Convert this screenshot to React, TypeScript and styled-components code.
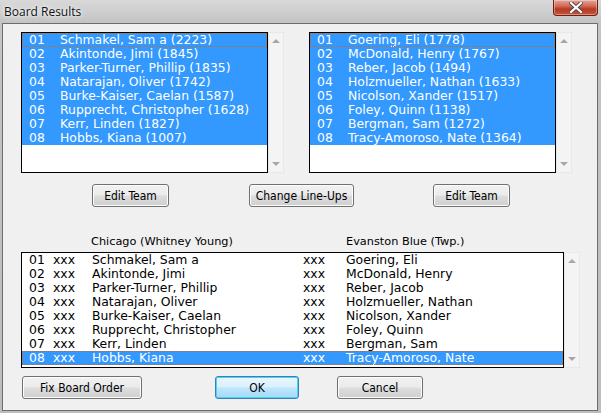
import React from "react";
import styled, { createGlobalStyle } from "styled-components";

const Global = createGlobalStyle`
  html, body { margin: 0; padding: 0; background: #f0f0f0; }
  body { font-family: "DejaVu Sans", Tahoma, sans-serif; }
  * { box-sizing: border-box; }
`;

const Window = styled.div`
  width: 601px;
  height: 413px;
  display: flex;
  flex-direction: column;
  background: linear-gradient(180deg, #d9d9d9 0px, #c4c4c4 22px, #bdbdbd 100%);
  padding: 0 3px 2px 2px;
`;

const TitleBar = styled.div`
  height: 23px;
  display: flex;
  align-items: flex-start;
  justify-content: space-between;
`;

const Title = styled.div`
  font-family: "Open Sans", "DejaVu Sans", sans-serif;
  font-size: 12px;
  color: #111;
  padding: 3px 0 0 2px;
  text-shadow: 0 0 6px #fff, 0 0 3px #fff;
`;

const CloseButton = styled.div`
  width: 45px;
  height: 16px;
  margin-left: auto;
  border: 1px solid #6e2014;
  border-top: none;
  border-radius: 0 0 4px 4px;
  background: linear-gradient(180deg, #e4a597 0%, #d26b57 40%, #b73a23 60%, #c9553c 100%);
  display: flex;
  align-items: center;
  justify-content: center;
  box-shadow: inset 0 0 0 1px rgba(255, 255, 255, 0.35);
`;

const Client = styled.div`
  flex: 1;
  background: #f0f0f0;
  border: 1px solid #6d6d6d;
  display: flex;
  flex-direction: column;
  padding: 8px 0 0 18px;
`;

const TopLists = styled.div`
  display: flex;
  gap: 25px;
`;

const ListWrap = styled.div`
  display: flex;
`;

const ListBox = styled.div<{ $w: number; $h: number }>`
  width: ${(p) => p.$w}px;
  height: ${(p) => p.$h}px;
  border: 1px solid #000;
  background: #fff;
  display: flex;
  flex-direction: column;
  overflow: hidden;
`;

const dot = "#c8681c";

const Row = styled.div<{ $sel?: boolean; $focus?: boolean }>`
  position: relative;
  height: 14px;
  flex: none;
  display: flex;
  align-items: center;
  font-size: 12.4px;
  line-height: 14px;
  white-space: nowrap;
  color: ${(p) => (p.$sel ? "#fff" : "#000")};
  background: ${(p) => (p.$sel ? "#3399ff" : "transparent")};
  &::after {
    content: "";
    display: ${(p) => (p.$focus ? "block" : "none")};
    position: absolute;
    inset: 0;
    pointer-events: none;
    background:
      linear-gradient(90deg, ${dot} 50%, transparent 50%) top left / 2px 1px repeat-x,
      linear-gradient(90deg, ${dot} 50%, transparent 50%) bottom left / 2px 1px repeat-x,
      linear-gradient(180deg, ${dot} 50%, transparent 50%) top left / 1px 2px repeat-y,
      linear-gradient(180deg, ${dot} 50%, transparent 50%) top right / 1px 2px repeat-y;
  }
`;

const Cell = styled.span<{ $w?: number; $pad?: number }>`
  display: inline-block;
  width: ${(p) => (p.$w ? `${p.$w}px` : "auto")};
  padding-left: ${(p) => p.$pad ?? 0}px;
  flex: none;
`;

const ScrollBar = styled.div<{ $h: number }>`
  width: 16px;
  height: ${(p) => p.$h}px;
  background: #f4f4f4;
  border: 1px solid #e8e8e8;
  display: flex;
  flex-direction: column;
  justify-content: space-between;
  align-items: center;
  padding: 6px 0 6px;
`;

const Arrow = styled.div<{ $down?: boolean }>`
  width: 0;
  height: 0;
  border-left: 4px solid transparent;
  border-right: 4px solid transparent;
  ${(p) =>
    p.$down
      ? "border-top: 4px solid #a7a7a7;"
      : "border-bottom: 4px solid #a7a7a7;"}
`;

const ButtonRow = styled.div<{ $top: number; $pad: number }>`
  display: flex;
  align-items: center;
  margin-top: ${(p) => p.$top}px;
  padding-left: ${(p) => p.$pad}px;
`;

const Button = styled.div<{ $w: number; $gap?: number; $default?: boolean }>`
  width: ${(p) => p.$w}px;
  height: 23px;
  margin-left: ${(p) => p.$gap ?? 0}px;
  border: 1px solid ${(p) => (p.$default ? "#3c7fb1" : "#707070")};
  border-radius: 3px;
  background: ${(p) =>
    p.$default
      ? "linear-gradient(180deg, #eaf6fd 0%, #d9f0fc 48%, #bee6fd 52%, #a7d9f5 100%)"
      : "linear-gradient(180deg, #f2f2f2 0%, #ebebeb 48%, #dddddd 52%, #cfcfcf 100%)"};
  box-shadow: inset 0 0 0 1px ${(p) => (p.$default ? "#48d3fb" : "#fcfcfc")};
  display: flex;
  align-items: center;
  justify-content: center;
  font-family: "DejaVu Sans Condensed", "DejaVu Sans", sans-serif;
  font-size: 12px;
  color: #000;
`;

const Labels = styled.div`
  display: flex;
  margin-top: 28px;
  height: 17px;
  font-size: 11.3px;
  color: #000;
`;

const Label = styled.div<{ $w: number; $pad?: number }>`
  width: ${(p) => p.$w}px;
  padding-left: ${(p) => p.$pad ?? 0}px;
  flex: none;
`;

const BottomWrap = styled.div`
  display: flex;
`;

const leftTeam = [
  ["01", "Schmakel, Sam a (2223)"],
  ["02", "Akintonde, Jimi (1845)"],
  ["03", "Parker-Turner, Phillip (1835)"],
  ["04", "Natarajan, Oliver (1742)"],
  ["05", "Burke-Kaiser, Caelan (1587)"],
  ["06", "Rupprecht, Christopher (1628)"],
  ["07", "Kerr, Linden (1827)"],
  ["08", "Hobbs, Kiana (1007)"],
];

const rightTeam = [
  ["01", "Goering, Eli (1778)"],
  ["02", "McDonald, Henry (1767)"],
  ["03", "Reber, Jacob (1494)"],
  ["04", "Holzmueller, Nathan (1633)"],
  ["05", "Nicolson, Xander (1517)"],
  ["06", "Foley, Quinn (1138)"],
  ["07", "Bergman, Sam (1272)"],
  ["08", "Tracy-Amoroso, Nate (1364)"],
];

const pairings = [
  ["01", "Schmakel, Sam a", "Goering, Eli"],
  ["02", "Akintonde, Jimi", "McDonald, Henry"],
  ["03", "Parker-Turner, Phillip", "Reber, Jacob"],
  ["04", "Natarajan, Oliver", "Holzmueller, Nathan"],
  ["05", "Burke-Kaiser, Caelan", "Nicolson, Xander"],
  ["06", "Rupprecht, Christopher", "Foley, Quinn"],
  ["07", "Kerr, Linden", "Bergman, Sam"],
  ["08", "Hobbs, Kiana", "Tracy-Amoroso, Nate"],
];

function TeamList({ rows }: { rows: string[][] }) {
  return (
    <ListWrap>
      <ListBox $w={247} $h={141}>
        {rows.map(([n, name], i) => (
          <Row key={n} $sel $focus={i === 0}>
            <Cell $w={38} $pad={7}>{n}</Cell>
            <Cell>{name}</Cell>
          </Row>
        ))}
      </ListBox>
      <ScrollBar $h={141}>
        <Arrow />
        <Arrow $down />
      </ScrollBar>
    </ListWrap>
  );
}

export default function App() {
  return (
    <>
      <Global />
      <Window>
        <TitleBar>
          <Title>Board Results</Title>
          <CloseButton>
            <svg width="14" height="11" viewBox="0 0 14 11">
              <path d="M2 1 L12 10 M12 1 L2 10" stroke="#4a4a4a" strokeWidth="4" strokeLinecap="square" />
              <path d="M2 1 L12 10 M12 1 L2 10" stroke="#fff" strokeWidth="2.2" strokeLinecap="square" />
            </svg>
          </CloseButton>
        </TitleBar>
        <Client>
          <TopLists>
            <TeamList rows={leftTeam} />
            <TeamList rows={rightTeam} />
          </TopLists>
          <ButtonRow $top={11} $pad={71}>
            <Button $w={77}>Edit Team</Button>
            <Button $w={105} $gap={80}>Change Line-Ups</Button>
            <Button $w={77} $gap={79}>Edit Team</Button>
          </ButtonRow>
          <Labels>
            <Label $w={325} $pad={70}>Chicago (Whitney Young)</Label>
            <Label $w={200}>Evanston Blue (Twp.)</Label>
          </Labels>
          <BottomWrap>
            <ListBox $w={543} $h={116}>
              {pairings.map(([n, a, b], i) => (
                <Row key={n} $sel={i === 7} $focus={i === 7}>
                  <Cell $w={31} $pad={7}>{n}</Cell>
                  <Cell $w={39}>xxx</Cell>
                  <Cell $w={211}>{a}</Cell>
                  <Cell $w={43}>xxx</Cell>
                  <Cell>{b}</Cell>
                </Row>
              ))}
            </ListBox>
            <ScrollBar $h={116}>
              <Arrow />
              <Arrow $down />
            </ScrollBar>
          </BottomWrap>
          <ButtonRow $top={8} $pad={1}>
            <Button $w={120}>Fix Board Order</Button>
            <Button $w={84} $gap={73} $default>OK</Button>
            <Button $w={86} $gap={38}>Cancel</Button>
          </ButtonRow>
        </Client>
      </Window>
    </>
  );
}
